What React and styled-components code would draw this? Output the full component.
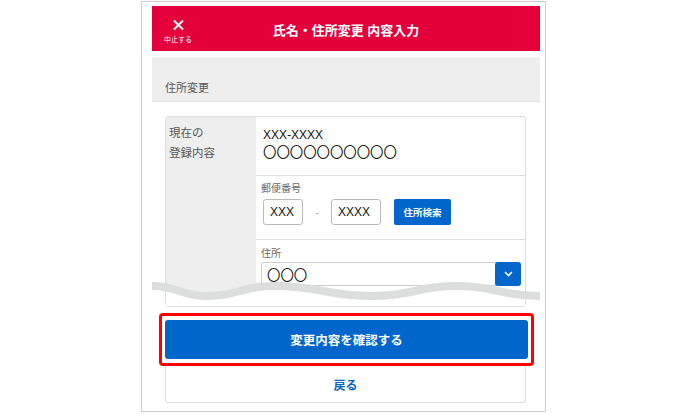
import React from "react";
import styled, { createGlobalStyle } from "styled-components";

const GlobalStyle = createGlobalStyle`
  html, body {
    margin: 0;
    padding: 0;
    background: #ffffff;
  }
  body {
    font-family: "Liberation Sans", "Noto Sans CJK JP", sans-serif;
    color: #222;
  }
`;

const Page = styled.div`
  padding: 1px 0 0 141px;
`;

const Frame = styled.div`
  width: 388px;
  padding: 4px 5px 8px 10px;
  border: 1px solid #cccccc;
`;

const Header = styled.header`
  height: 45px;
  background: #e4003b;
  display: grid;
  grid-template-columns: 1fr auto 1fr;
  color: #fff;
`;

const CloseButton = styled.div`
  width: 32px;
  margin-left: 10px;
  padding-top: 14px;
  display: flex;
  flex-direction: column;
  align-items: center;
  gap: 6px;
`;

const CloseLabel = styled.span`
  font-size: 7px;
  line-height: 8px;
  white-space: nowrap;
`;

const Title = styled.h1`
  margin: 0;
  padding-top: 2px;
  display: flex;
  align-items: center;
  font-size: 13px;
  font-weight: 700;
  white-space: nowrap;
`;

const SectionBar = styled.div`
  margin-top: 6px;
  height: 45px;
  box-sizing: border-box;
  background: #eeeeee;
  border-bottom: 1px solid #e2e2e2;
  display: flex;
  align-items: flex-end;
  padding: 0 13px 6px;
  font-size: 11px;
  line-height: 14px;
  color: #555;
`;

const Card = styled.div`
  position: relative;
  margin: 14px 14px 0 13px;
  border: 1px solid #dddddd;
  border-radius: 3px;
  display: grid;
  grid-template-columns: 90px 1fr;
  grid-template-rows: 58px 64px 67px;
`;

const LabelCell = styled.div`
  background: #eeeeee;
  padding: 6px 0 0 3px;
  font-size: 11.5px;
  line-height: 20px;
  color: #555;
  grid-row: ${(p) => p.$rows || "auto"};
`;

const ValueCell = styled.div`
  padding: ${(p) => p.$pad || "0"};
  border-top: ${(p) => (p.$first ? "none" : "1px solid #dddddd")};
`;

const CurrentValue = styled.div`
  font-size: 12px;
  line-height: 18px;
  color: #111;
`;

const Circles = styled.div`
  font-size: 13.4px;
  line-height: 18px;
  color: #111;
  white-space: nowrap;
`;

const FieldLabel = styled.div`
  font-size: 10px;
  line-height: 14px;
  color: #666;
`;

const ZipRow = styled.div`
  display: flex;
  align-items: center;
  margin: 3px 0 0 2px;
`;

const TextInput = styled.div`
  width: ${(p) => p.$w}px;
  height: 26px;
  box-sizing: border-box;
  border: 1px solid #bbbbbb;
  border-radius: 3px;
  padding-left: 6px;
  display: flex;
  align-items: center;
  font-size: 12px;
  color: #111;
`;

const Dash = styled.span`
  width: 28px;
  text-align: center;
  font-size: 11px;
  color: #aaa;
`;

const SearchButton = styled.button`
  margin-left: 13px;
  height: 26px;
  width: 57px;
  border: none;
  border-radius: 2px;
  background: #0066cc;
  color: #fff;
  font-family: inherit;
  font-size: 9.5px;
  font-weight: 700;
  padding: 0;
`;

const Select = styled.div`
  margin: 1px 4px 0 0;
  height: 24px;
  box-sizing: border-box;
  border: 1px solid #cccccc;
  border-radius: 3px;
  display: flex;
  align-items: center;
  padding-left: 5px;
  font-size: 13.4px;
  color: #111;
`;

const SelectText = styled.span`
  flex: 1;
`;

const SelectArrow = styled.span`
  width: 26px;
  height: 24px;
  margin: -1px -1px -1px 0;
  border-radius: 3px;
  background: #0066cc;
  display: flex;
  align-items: center;
  justify-content: center;
`;

const Cut = styled.svg`
  position: absolute;
  left: -14px;
  top: 160px;
  width: 388px;
  height: 30px;
  z-index: 2;
`;

const Highlight = styled.div`
  margin: 6px 6px 0 7px;
  border: 3px solid #ff0000;
  border-radius: 4px;
  padding: 4px 3px 4px 3px;
`;

const PrimaryButton = styled.button`
  display: block;
  width: 100%;
  height: 39px;
  border: none;
  border-radius: 3px;
  background: #0066cc;
  color: #fff;
  font-family: inherit;
  font-size: 12.5px;
  font-weight: 700;
`;

const BackButton = styled.button`
  display: block;
  margin: 0 14px 0 13px;
  width: 361px;
  height: 37px;
  border: 1px solid #dddddd;
  border-top: none;
  border-radius: 0 0 3px 3px;
  background: #fff;
  color: #0066cc;
  font-family: inherit;
  font-size: 12px;
  font-weight: 700;
`;

const wave =
  "M0,9 C27,9 28,19 55,19 C88,19 88,9 121,9 C171,9 171,19 221,19 C263,19 263,9 305,9 C346,9 346,19 388,19";

export default function App() {
  return (
    <Page>
      <GlobalStyle />
      <Frame>
        <Header>
          <CloseButton>
            <svg width="11" height="10" viewBox="0 0 11 10">
              <path d="M1 0.5 L10 9.5 M10 0.5 L1 9.5" stroke="#fff" strokeWidth="2" />
            </svg>
            <CloseLabel>中止する</CloseLabel>
          </CloseButton>
          <Title>氏名・住所変更 内容入力</Title>
          <div />
        </Header>

        <SectionBar>住所変更</SectionBar>

        <Card>
          <LabelCell>
            現在の
            <br />
            登録内容
          </LabelCell>
          <ValueCell $first $pad="9px 0 0 7px">
            <CurrentValue>XXX-XXXX</CurrentValue>
            <Circles>〇〇〇〇〇〇〇〇〇〇</Circles>
          </ValueCell>

          <LabelCell $rows="2 / 4" />
          <ValueCell $pad="6px 0 0 5px">
            <FieldLabel>郵便番号</FieldLabel>
            <ZipRow>
              <TextInput $w={40}>XXX</TextInput>
              <Dash>-</Dash>
              <TextInput $w={50}>XXXX</TextInput>
              <SearchButton>住所検索</SearchButton>
            </ZipRow>
          </ValueCell>
          <ValueCell $pad="7px 0 0 5px">
            <FieldLabel>住所</FieldLabel>
            <Select>
              <SelectText>〇〇〇</SelectText>
              <SelectArrow>
                <svg width="9" height="6" viewBox="0 0 9 6">
                  <path d="M1 1 L4.5 4.5 L8 1" stroke="#fff" strokeWidth="1.6" fill="none" />
                </svg>
              </SelectArrow>
            </Select>
          </ValueCell>

          <Cut viewBox="0 0 388 30">
            <defs>
              <clipPath id="cardInner">
                <rect x="14" y="0" width="359" height="29" />
              </clipPath>
            </defs>
            <path d={wave + " L388,30 L0,30 Z"} fill="#fff" clipPath="url(#cardInner)" />
            <path d={wave} stroke="#dcdddd" strokeWidth="8" fill="none" />
          </Cut>
        </Card>

        <Highlight>
          <PrimaryButton>変更内容を確認する</PrimaryButton>
        </Highlight>
        <BackButton>戻る</BackButton>
      </Frame>
    </Page>
  );
}
